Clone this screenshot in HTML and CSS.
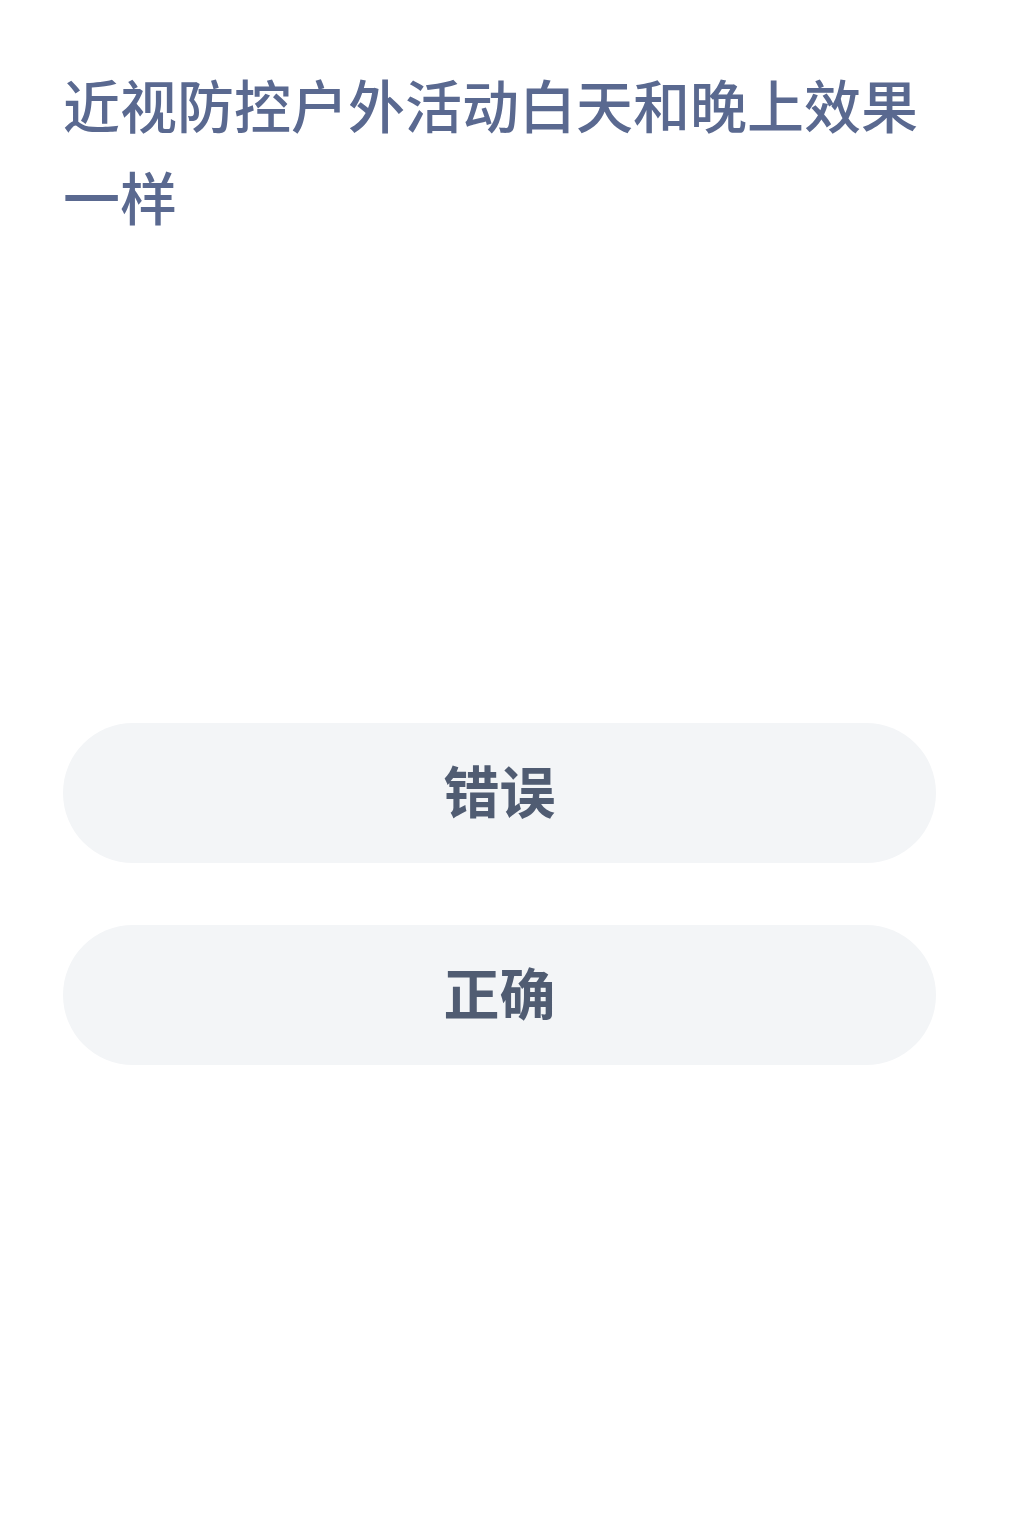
FILE: index.html
```html
<!DOCTYPE html>
<html lang="zh-CN">
<head>
    <meta charset="UTF-8">
    <meta name="viewport" content="width=device-width, initial-scale=1.0">
    <title>判断题</title>
    <link rel="stylesheet" href="styles.css">
</head>
<body>

<div class="quiz">
    <div class="question">近视防控户外活动白天和晚上效果一样</div>

    <div class="options">
        <button class="option">错误</button>
        <button class="option">正确</button>
    </div>
</div>

</body>
</html>
```

FILE: styles.css
```css
body {
    margin: 0;
    padding: 0;
    background-color: #ffffff;
    font-family: "Noto Sans CJK SC", "Noto Sans", sans-serif;
}
.quiz {
    padding: 57px 78px 0 63px;
}
.question {
    font-size: 57px;
    font-weight: 500;
    line-height: 92px;
    color: #5a6990;
}
.options {
    display: flex;
    flex-direction: column;
    gap: 62px;
    margin-top: 482px;
}
.option {
    height: 140px;
    padding: 0 0 10px 0;
    border: none;
    border-radius: 70px;
    background-color: #f3f5f7;
    color: #505c72;
    font-family: inherit;
    font-size: 56px;
    font-weight: bold;
    cursor: pointer;
}
```
